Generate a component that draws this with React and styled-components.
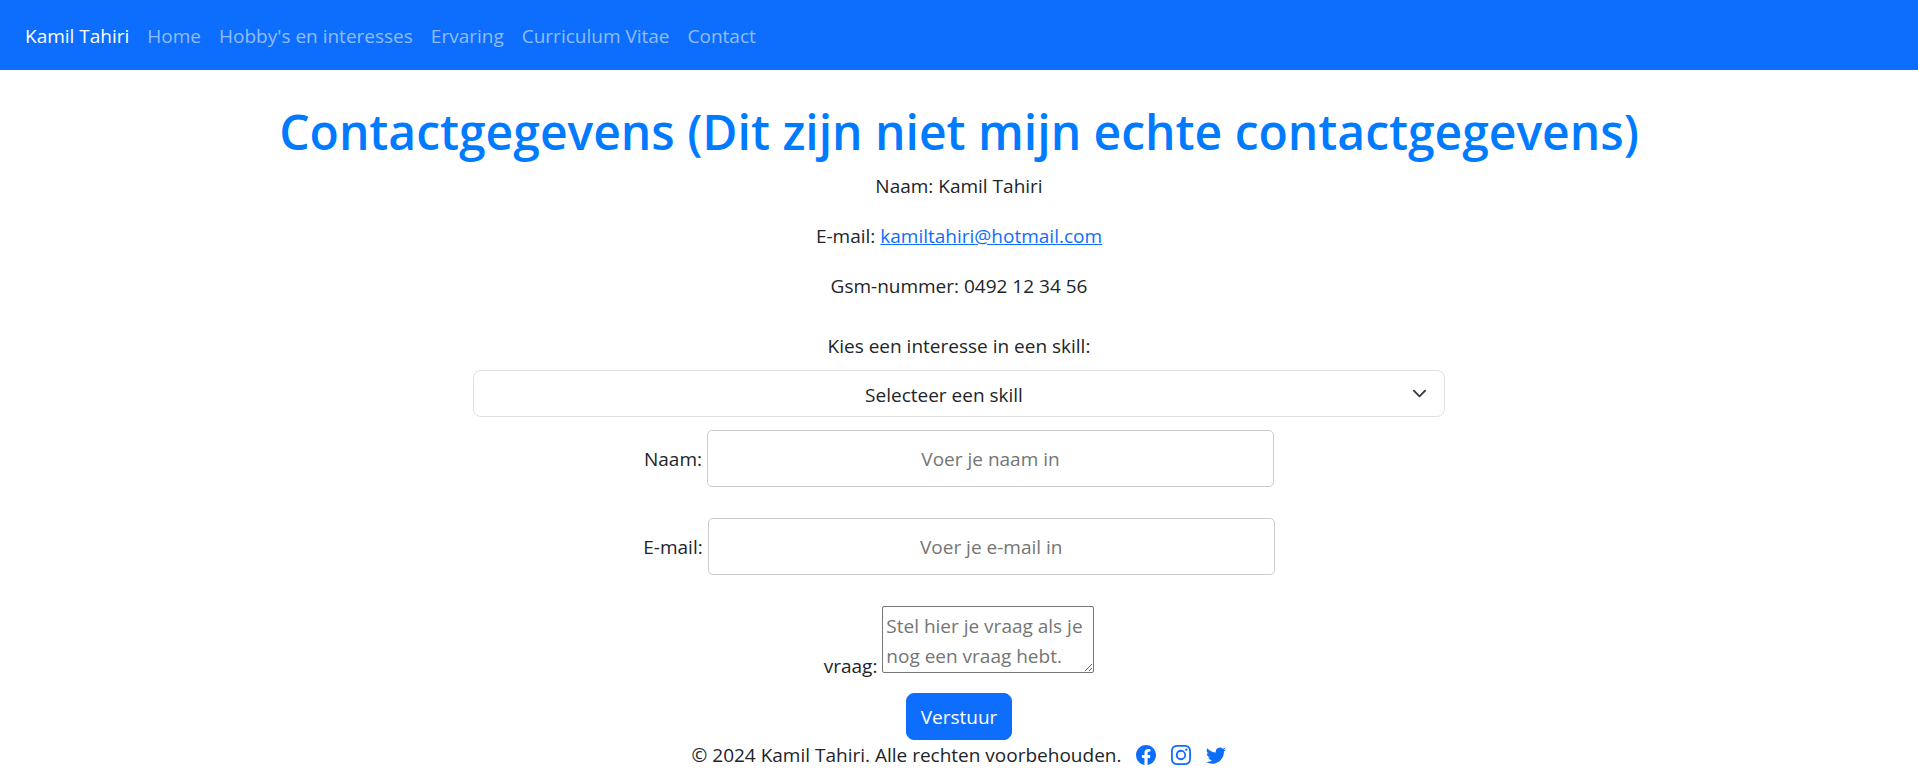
import React from "react";
import styled, { createGlobalStyle } from "styled-components";
import { BsFacebook, BsInstagram, BsTwitter } from "react-icons/bs";

const GlobalStyle = createGlobalStyle`
  *, *::before, *::after { box-sizing: border-box; }
  body {
    margin: 0;
    background: #fff;
    color: #212529;
    font-family: "Segoe UI", "Open Sans", "Noto Sans", sans-serif;
    font-size: 19px;
    line-height: 30px;
  }
  input, select, textarea, button { font: inherit; margin: 0; }
`;

const Navbar = styled.nav`
  display: flex;
  align-items: center;
  gap: 18px;
  height: 70px;
  padding: 2px 25px 0;
  background: #0d6efd;
`;

const NavLink = styled.a`
  color: ${(p) => (p.$brand ? "#fff" : "rgba(255, 255, 255, 0.55)")};
  text-decoration: none;
`;

const Container = styled.main`
  display: flex;
  flex-direction: column;
  align-items: center;
  max-width: 1650px;
  margin: 0 auto;
  padding: 32px 15px 0;
`;

const Title = styled.h1`
  margin: 0 0 9px;
  color: #007bff;
  font-size: 48px;
  font-weight: 600;
  line-height: 60px;
  text-align: center;
`;

const Detail = styled.p`
  margin: 0 0 20px;
`;

const MailLink = styled.a`
  color: #0d6efd;
`;

const Form = styled.form`
  display: flex;
  flex-direction: column;
  align-items: center;
  width: 100%;
  padding-top: 10px;
`;

const SelectLabel = styled.label`
  margin-bottom: 9px;
`;

const SelectBox = styled.div`
  position: relative;
  width: 60%;
  margin-bottom: 13px;
`;

const Select = styled.select`
  display: block;
  width: 100%;
  height: 47px;
  padding: 8px 45px 6px 15px;
  border: 1px solid #dee2e6;
  border-radius: 8px;
  background: #fff;
  color: #212529;
  text-align: center;
  appearance: none;
`;

const Chevron = styled.svg`
  position: absolute;
  top: 16px;
  right: 18px;
  width: 15px;
  height: 15px;
  pointer-events: none;
`;

const Field = styled.div`
  display: flex;
  align-items: center;
  justify-content: center;
  gap: 5px;
  width: 100%;
  margin-bottom: 31px;
`;

const QuestionField = styled.div`
  margin-bottom: 12px;
  text-align: center;
`;

const Input = styled.input`
  width: 35%;
  height: 57px;
  padding: 12px;
  border: 1px solid #ccc;
  border-radius: 5px;
  color: #212529;
  text-align: center;
  &::placeholder { color: #757575; }
`;

const Textarea = styled.textarea`
  width: 212px;
  height: 67px;
  padding: 4px 3px 2px;
  border: 1px solid #767676;
  border-radius: 2px;
  overflow: hidden;
  resize: both;
  &::placeholder { color: #757575; }
`;

const SubmitButton = styled.button`
  height: 47px;
  padding: 1px 14px 0;
  border: 1px solid #0d6efd;
  border-radius: 8px;
  background: #0d6efd;
  color: #fff;
`;

const Footer = styled.footer`
  display: flex;
  align-items: center;
  justify-content: center;
  gap: 15px;
`;

const SocialLink = styled.a`
  display: flex;
  color: #0d6efd;
  font-size: 20px;
`;

const pages = ["Home", "Hobby's en interesses", "Ervaring", "Curriculum Vitae", "Contact"];
const skills = ["HTML", "CSS", "JavaScript"];
const socials = [
  { name: "Facebook", Icon: BsFacebook },
  { name: "Instagram", Icon: BsInstagram },
  { name: "Twitter", Icon: BsTwitter },
];

export default function App() {
  return (
    <>
      <GlobalStyle />
      <Navbar>
        <NavLink href="#" $brand>Kamil Tahiri</NavLink>
        {pages.map((page) => (
          <NavLink key={page} href="#">{page}</NavLink>
        ))}
      </Navbar>
      <Container>
        <Title>Contactgegevens (Dit zijn niet mijn echte contactgegevens)</Title>
        <Detail>Naam: Kamil Tahiri</Detail>
        <Detail>
          E-mail: <MailLink href="mailto:kamiltahiri@hotmail.com">kamiltahiri@hotmail.com</MailLink>
        </Detail>
        <Detail>Gsm-nummer: 0492 12 34 56</Detail>
        <Form>
          <SelectLabel htmlFor="skill">Kies een interesse in een skill:</SelectLabel>
          <SelectBox>
            <Select id="skill" defaultValue="">
              <option value="">Selecteer een skill</option>
              {skills.map((skill) => (
                <option key={skill}>{skill}</option>
              ))}
            </Select>
            <Chevron viewBox="0 0 16 16" fill="none" stroke="#343a40" strokeWidth="2" strokeLinecap="round" strokeLinejoin="round" aria-hidden="true">
              <path d="m2 5 6 6 6-6" />
            </Chevron>
          </SelectBox>
          <Field>
            <label htmlFor="name">Naam:</label>
            <Input id="name" type="text" placeholder="Voer je naam in" />
          </Field>
          <Field>
            <label htmlFor="email">E-mail:</label>
            <Input id="email" type="email" placeholder="Voer je e-mail in" />
          </Field>
          <QuestionField>
            <label htmlFor="question">vraag:</label>{" "}
            <Textarea id="question" placeholder="Stel hier je vraag als je nog een vraag hebt." />
          </QuestionField>
          <SubmitButton type="submit">Verstuur</SubmitButton>
        </Form>
      </Container>
      <Footer>
        <span>© 2024 Kamil Tahiri. Alle rechten voorbehouden.</span>
        {socials.map(({ name, Icon }) => (
          <SocialLink key={name} href="#" aria-label={name}>
            <Icon />
          </SocialLink>
        ))}
      </Footer>
    </>
  );
}
